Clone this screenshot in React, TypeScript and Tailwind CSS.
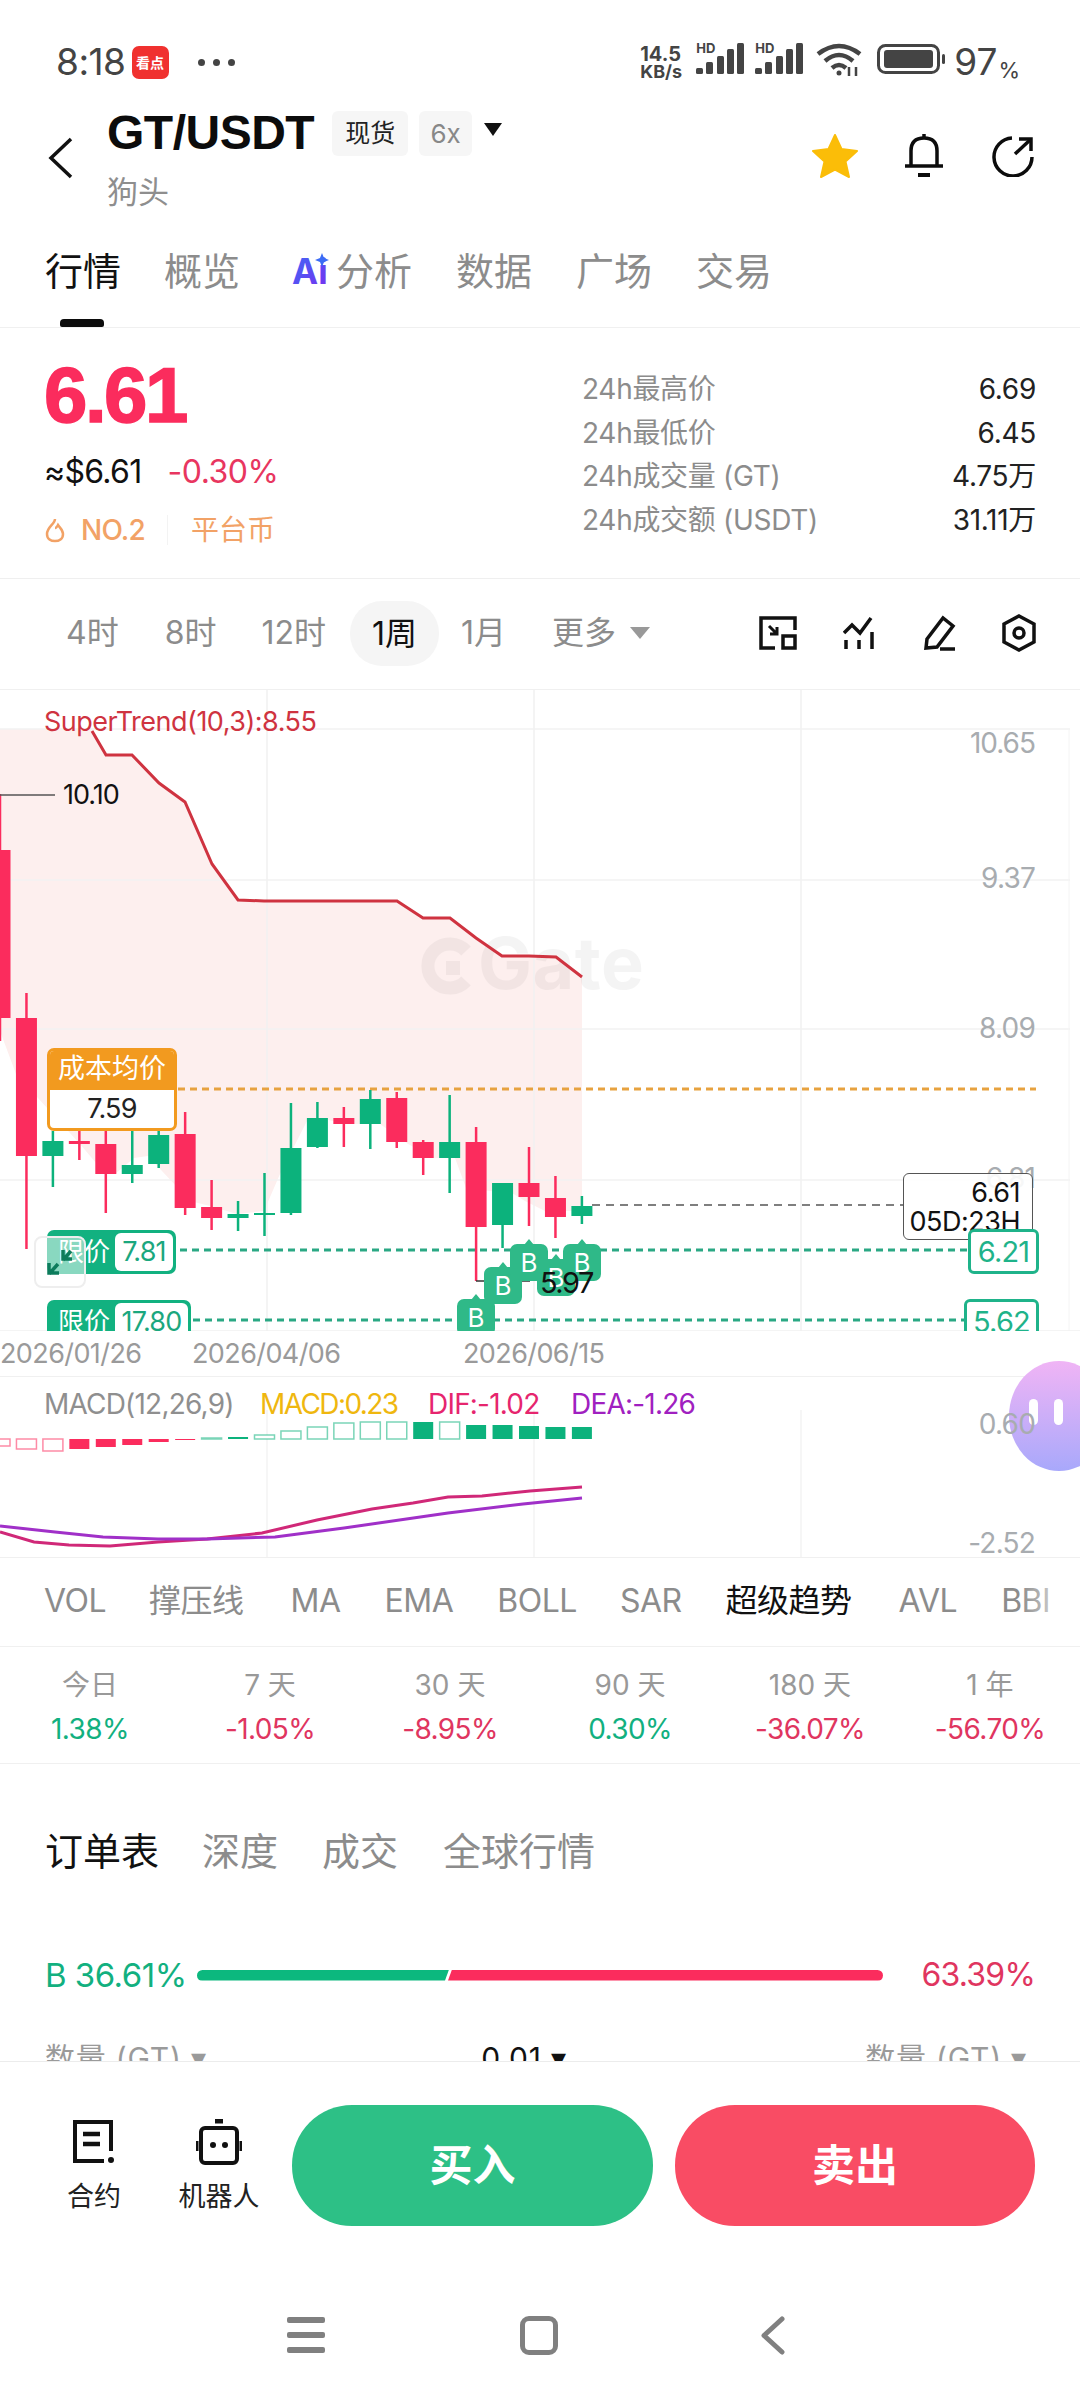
import React from 'react';

const font = { fontFamily: '"Inter","Noto Sans CJK SC",sans-serif' };

// [top wick, body top, body bottom, bottom wick, up]
const candles: [number, number, number, number, boolean][] = [
  [793, 849, 1017, 1040, false],
  [992, 1017, 1155, 1248, false],
  [1130, 1140, 1155, 1186, true],
  [1130, 1140, 1143, 1159, false],
  [1130, 1143, 1173, 1212, false],
  [1130, 1164, 1173, 1182, true],
  [1130, 1134, 1163, 1167, true],
  [1111, 1133, 1207, 1214, false],
  [1179, 1206, 1217, 1229, false],
  [1200, 1213, 1217, 1230, true],
  [1172, 1212, 1214, 1235, true],
  [1102, 1147, 1212, 1214, true],
  [1101, 1117, 1146, 1147, true],
  [1106, 1117, 1123, 1146, false],
  [1089, 1098, 1123, 1148, true],
  [1091, 1097, 1141, 1147, false],
  [1139, 1141, 1157, 1174, false],
  [1094, 1141, 1157, 1192, true],
  [1126, 1141, 1226, 1280, false],
  [1182, 1182, 1224, 1247, true],
  [1146, 1182, 1196, 1225, false],
  [1175, 1197, 1216, 1237, false],
  [1195, 1205, 1215, 1223, true],
];

// [top y, bottom y, kind]
const macdBars: [number, number, string][] = [
  [1439, 1446, 'hr'], [1439, 1449, 'hr'], [1439, 1451, 'hr'], [1439, 1449, 'r'], [1439, 1447, 'r'], [1439, 1445, 'r'],
  [1439, 1442, 'r'], [1439, 1440, 'r'], [1438, 1439, 'hg'], [1437, 1439, 'g'], [1435, 1439, 'hg'], [1431, 1439, 'hg'],
  [1427, 1439, 'hg'], [1423, 1439, 'hg'], [1422, 1439, 'hg'], [1422, 1439, 'hg'], [1422, 1439, 'g'], [1422, 1439, 'hg'],
  [1425, 1439, 'g'], [1425, 1439, 'g'], [1426, 1439, 'g'], [1427, 1439, 'g'], [1427, 1439, 'g'],
];

const periods = [
  { label: '今日', value: '1.38%', up: true },
  { label: '7 天', value: '-1.05%', up: false },
  { label: '30 天', value: '-8.95%', up: false },
  { label: '90 天', value: '0.30%', up: true },
  { label: '180 天', value: '-36.07%', up: false },
  { label: '1 年', value: '-56.70%', up: false },
];

const stats = [
  ['24h最高价', '6.69'],
  ['24h最低价', '6.45'],
  ['24h成交量 (GT)', '4.75万'],
  ['24h成交额 (USDT)', '31.11万'],
];

function StatusBar() {
  return (
    <div className="h-[104px] flex items-start justify-between pl-[56px] pr-[60px] pt-[43px] text-[#444]">
      <div className="flex items-center">
        <span className="text-[37px] leading-[38px] tracking-[-0.5px]">8:18</span>
        <div className="ml-[6px] w-[37px] h-[33px] rounded-[7px] bg-[#f0312f] text-white text-[14px] leading-[33px] font-bold text-center">看点</div>
        <div className="ml-[29px] flex gap-[8px]">
          <div className="w-[7px] h-[7px] rounded-full bg-[#444]" />
          <div className="w-[7px] h-[7px] rounded-full bg-[#444]" />
          <div className="w-[7px] h-[7px] rounded-full bg-[#444]" />
        </div>
      </div>
      <div className="flex items-start">
        <div className="w-[50px] font-bold text-[18px] leading-[17px] mt-[3px]">
          <div className="text-[20px]">14.5</div>
          <div>KB/s</div>
        </div>
        <Signal className="ml-[6px]" />
        <Signal className="ml-[11px]" />
        <svg className="ml-[13px]" width="46" height="34" viewBox="0 0 46 34" fill="none" stroke="#444" strokeWidth="4.5">
          <path d="M2 11 Q23 -5 44 11" />
          <path d="M9 18 Q23 6 37 18" />
          <path d="M16 25 Q23 19 30 25" />
          <circle cx="23" cy="30" r="2.5" fill="#444" stroke="none" />
          <path d="M33 24v9M40 24v9" strokeWidth="2.5" />
        </svg>
        <svg className="ml-[15px] mt-px" width="68" height="30" viewBox="0 0 68 30" fill="none">
          <rect x="1.5" y="1.5" width="60" height="27" rx="7" stroke="#444" strokeWidth="3" />
          <rect x="7" y="6" width="49" height="18" rx="3" fill="#444" />
          <rect x="65" y="10" width="3" height="10" rx="1.5" fill="#444" />
        </svg>
        <span className="ml-[9px] text-[37px] leading-[38px]">97</span>
        <span className="text-[22px] leading-[22px] mt-[16px] ml-px">%</span>
      </div>
    </div>
  );
}

function Signal({ className }: { className: string }) {
  return (
    <div className={`relative w-[48px] h-[32px] ${className}`}>
      <span className="absolute left-0 top-0 text-[13px] leading-[11px] font-bold">HD</span>
      <svg className="absolute left-0 top-0" width="48" height="32" viewBox="0 0 48 32" fill="#444">
        <rect x="0" y="25" width="7" height="6" rx="1.5" />
        <rect x="10" y="19" width="7" height="12" rx="1.5" />
        <rect x="21" y="13" width="7" height="18" rx="1.5" />
        <rect x="31" y="6" width="7" height="25" rx="1.5" />
        <rect x="41" y="0" width="7" height="31" rx="1.5" />
      </svg>
    </div>
  );
}

function Header() {
  return (
    <div className="h-[116px] flex items-start pl-[48px] pr-[46px]">
      <svg className="mt-[33px]" width="26" height="42" viewBox="0 0 26 42" fill="none" stroke="#111" strokeWidth="3.5">
        <path d="M23 2 L3 21 L23 40" />
      </svg>
      <div className="ml-[33px] mt-[2px]">
        <div className="flex items-center">
          <span className="text-[48px] leading-[54px] font-bold text-[#0c0c0c] tracking-[-0.5px]" style={{ fontFamily: '"Liberation Sans",sans-serif' }}>GT/USDT</span>
          <span className="ml-[18px] w-[76px] h-[45px] rounded-[6px] bg-[#f6f6f6] text-[25px] leading-[45px] text-center text-[#222]">现货</span>
          <span className="ml-[11px] w-[53px] h-[45px] rounded-[6px] bg-[#f6f6f6] text-[26px] leading-[45px] text-center text-[#888]">6x</span>
          <div className="ml-[12px] -mt-[8px] w-0 h-0 border-x-[9px] border-x-transparent border-t-[13px] border-t-[#111]" />
        </div>
        <div className="text-[31px] leading-[34px] text-[#8e8e8e] mt-[15px]">狗头</div>
      </div>
      <div className="ml-auto mt-[29px] flex items-center">
        <svg width="46" height="44" viewBox="0 0 46 44" fill="#fbbd08">
          <path d="M23 1 L29.5 15 L45 17 L33.5 27.5 L37 43 L23 35.5 L9 43 L12.500 27.500 L1 17 L16.500 15 Z" stroke="#fbbd08" strokeLinejoin="round" strokeWidth="2" />
        </svg>
        <svg className="ml-[46px]" width="40" height="46" viewBox="0 0 40 46" fill="none" stroke="#0c0c0c" strokeWidth="3.5">
          <path d="M1 33 H39" />
          <path d="M7 33 V18 C7 9 12 5 20 5 C28 5 33 9 33 18 V33" />
          <path d="M20 1 V5" />
          <path d="M14 42 H26" strokeWidth="4" />
        </svg>
        <svg className="ml-[48px]" width="42" height="42" viewBox="0 0 42 42" fill="none" stroke="#0c0c0c" strokeWidth="3.5">
          <path d="M40 22 A19 19 0 1 1 20 3" />
          <path d="M23 19 L38 5" />
          <path d="M27 4 H39 V16" />
        </svg>
      </div>
    </div>
  );
}

function Tabs() {
  return (
    <div className="relative h-[108px] border-b border-[#f0f0f0] flex items-start pl-[45px] pt-[31px] text-[38px] leading-[40px] text-[#8c8c8c]">
      <span className="text-[#111]">行情</span>
      <span className="ml-[43px]">概览</span>
      <span className="ml-[52px] flex items-center">
        <svg className="overflow-visible" width="38" height="36" viewBox="0 0 38 36">
          <defs>
            <linearGradient id="ai" x1="0" y1="0" x2="1" y2="1">
              <stop offset="0" stopColor="#3b6cf5" />
              <stop offset="1" stopColor="#7a2df0" />
            </linearGradient>
          </defs>
          <text x="0" y="31" fontSize="35" fontWeight="700" fill="url(#ai)" fontFamily="Inter">Ai</text>
          <path d="M30 0 L32 5 L37 7 L32 9 L30 14 L28 9 L23 7 L28 5 Z" fill="#3b6cf5" />
        </svg>
        <span className="ml-[6px]">分析</span>
      </span>
      <span className="ml-[44px]">数据</span>
      <span className="ml-[44px]">广场</span>
      <span className="ml-[44px]">交易</span>
      <div className="absolute left-[60px] bottom-0 w-[44px] h-[8px] rounded-t-[4px] rounded-b-[2px] bg-[#0c0c0c]" />
    </div>
  );
}

function PriceBlock() {
  return (
    <div className="h-[251px] border-b border-[#efefef] flex pl-[44px] pr-[44px]">
      <div className="w-[538px]">
        <div className="mt-[29px] text-[78px] leading-[76px] font-extrabold text-[#fb2c5d] tracking-[-2.5px]" style={{ fontFamily: '"Liberation Sans",sans-serif', WebkitTextStroke: '1.5px #fb2c5d' }}>6.61</div>
        <div className="mt-[20px] flex items-center text-[32px] leading-[38px]">
          <span className="text-[#111] tracking-[-0.7px]">≈$6.61</span>
          <span className="ml-[26px] text-[#e8365f] tracking-[-0.5px]">-0.30%</span>
        </div>
        <div className="mt-[23px] flex items-center text-[#f2a266] text-[28px] leading-[32px]">
          <svg width="22" height="26" viewBox="0 0 22 26" fill="none" stroke="#f2a266" strokeWidth="2.5">
            <path d="M11 2 C11 7 3 10 3 17 C3 22 7 24 11 24 C15 24 19 22 19 17 C19 13 16 11 14 8 C13 10 12 11 11 11" />
          </svg>
          <span className="ml-[15px] font-medium tracking-[-0.8px]">NO.2</span>
          <div className="ml-[22px] w-px h-[30px] bg-[#f3f3f3]" />
          <span className="ml-[23px]">平台币</span>
        </div>
      </div>
      <div className="flex-1 pt-[47px]">
        {stats.map(([k, v]) => (
          <div key={k} className="h-[43.700px] flex justify-between items-start text-[28px] leading-[28px] tracking-[-0.3px]">
            <span className="text-[#8c8c8c]">{k}</span>
            <span className="text-[#222] tracking-[-0.3px]">{v}</span>
          </div>
        ))}
      </div>
    </div>
  );
}

function PeriodRow() {
  return (
    <div className="h-[110px] flex items-center pl-[66px] pr-[44px] pb-[2px] text-[32px] text-[#8c8c8c]">
      <span>4时</span>
      <span className="ml-[46px]">8时</span>
      <span className="ml-[45px]">12时</span>
      <span className="ml-[24px] w-[89px] h-[65px] rounded-[32px] bg-[#f5f5f5] text-[#111] text-center leading-[65px]">1周</span>
      <span className="ml-[22px]">1月</span>
      <span className="ml-[46px]">更多</span>
      <div className="ml-[14px] w-0 h-0 border-x-[10px] border-x-transparent border-t-[12px] border-t-[#999]" />
      <div className="ml-auto flex items-center gap-[46px]">
        <svg width="38" height="34" viewBox="0 0 38 34" fill="none" stroke="#111" strokeWidth="3.5">
          <path d="M16 32 H2 V2 H36 V14" />
          <path d="M24 32 V20 H36 V32 Z" />
          <path d="M10 10 L18 18 M18 11 V18 H11" strokeWidth="3" />
        </svg>
        <svg width="33" height="34" viewBox="0 0 33 34" fill="none" stroke="#111" strokeWidth="3.5">
          <path d="M1 17 L9 9 L17 17 L28 2" />
          <path d="M3 24 V33 M16 24 V33 M29 16 V33" />
        </svg>
        <svg width="34" height="36" viewBox="0 0 34 36" fill="none" stroke="#111" strokeWidth="3.500">
          <path d="M5 24 L21 3 L31 11 L15 32 L4 33 Z" />
          <path d="M18 34 H33" />
        </svg>
        <svg width="34" height="38" viewBox="0 0 34 38" fill="none" stroke="#111" strokeWidth="3.500">
          <path d="M17 2 L32 10 V28 L17 36 L2 28 V10 Z" />
          <circle cx="17" cy="19" r="5" />
        </svg>
      </div>
    </div>
  );
}

function CandleChart() {
  const up = '#0cb27c';
  const down = '#fb2c5d';
  return (
    <svg className="absolute left-0 top-0" width="1080" height="641" viewBox="0 689 1080 641">
      {/* pink band under the supertrend */}
      <polygon
        fill="#fdefee"
        points="0,728 92,728 106,754 132,754 159,782 185,801 212,863 238,899 264,900 397,900 423,917 450,917 476,937 502,955 529,955 556,956 582,976 582,1210 545,1210 525,1200 512,1192 490,1190 466,1187 455,1157 434,1157 408,1143 380,1123 345,1123 320,1117 307,1120 280,1173 264,1210 237,1213 210,1205 190,1200 148,1155 134,1157 115,1173 96,1162 80,1143 16,1073 0,1030"
      />
      {[728, 879, 1028, 1179].map((y) => (
        <line key={y} x1="0" x2="1070" y1={y} y2={y} stroke="#f2f2f2" strokeWidth="1.5" />
      ))}
      {[267, 534, 801].map((x) => (
        <line key={x} x1={x} x2={x} y1="689" y2="1330" stroke="#f1f1f1" strokeWidth="1.5" />
      ))}
      <line x1="1069" x2="1069" y1="728" y2="1330" stroke="#f4f4f4" strokeWidth="1" />
      <line x1="0" x2="1080" y1="1330" y2="1330" stroke="#f0f0f0" strokeWidth="1.5" />

      {/* watermark */}
      <g opacity="0.04">
        <path d="M466 950 A 22 22 0 1 0 466 980" fill="none" stroke="#000" strokeWidth="13" />
        <rect x="446" y="960" width="14" height="14" fill="#000" />
        <text x="478" y="988" fontSize="72" fontWeight="700" fontFamily="Inter" fill="#000" letterSpacing="0.5">Gate</text>
      </g>

      <polyline
        fill="none"
        stroke="#cf3340"
        strokeWidth="3"
        points="92,730 106,754 132,754 159,782 185,801 212,863 238,899 264,900 397,900 423,917 450,917 476,937 502,955 529,955 556,956 582,976"
      />

      {/* price lines */}
      <line x1="178" x2="1036" y1="1088" y2="1088" stroke="#e7a23f" strokeWidth="3" strokeDasharray="7 5" />
      <line x1="180" x2="968" y1="1249" y2="1249" stroke="#2aa884" strokeWidth="3" strokeDasharray="7 5" />
      <line x1="193" x2="965" y1="1319" y2="1319" stroke="#2aa884" strokeWidth="3" strokeDasharray="7 5" />
      <line x1="592" x2="903" y1="1204" y2="1204" stroke="#555" strokeWidth="1.5" strokeDasharray="8 6" />

      {candles.map(([high, top, bottom, low, isUp], i) => {
        const x = i * 26.45;
        const c = isUp ? up : down;
        return (
          <g key={i}>
            <line x1={x} x2={x} y1={high} y2={low} stroke={c} strokeWidth="2.5" />
            <rect x={x - 10.5} y={top} width="21" height={bottom - top} fill={c} />
          </g>
        );
      })}

      <line x1="0" x2="55" y1="794" y2="794" stroke="#555" strokeWidth="1.5" />
      <line x1="476" x2="530" y1="1280" y2="1280" stroke="#333" strokeWidth="1.5" />
    </svg>
  );
}

function BuyMark({ x, top }: { x: number; top: number }) {
  return (
    <div className="absolute w-[38px] h-[37px] rounded-[7px] bg-[#2fb988] text-white text-[26px] leading-[37px] text-center" style={{ left: x - 19, top: top - 689 }}>
      <div className="absolute left-[14px] -top-[5px] w-0 h-0 border-x-[5px] border-x-transparent border-b-[6px] border-b-[#2fb988]" />
      B
    </div>
  );
}

function ChartPanel() {
  return (
    <div className="h-[687px] relative border-t border-[#f0f0f0] overflow-hidden">
      <CandleChart />
      <div className="absolute left-[44px] top-[15px] text-[27px] leading-[34px] text-[#cf3340] tracking-[-0.5px]">SuperTrend(10,3):8.55</div>
      <div className="absolute left-[63px] top-[88px] text-[27px] leading-[34px] text-[#111] tracking-[-1px]">10.10</div>

      <div className="absolute right-[45px] top-[36px] text-[28px] leading-[34px] text-[#a8acb0] tracking-[-1px]">10.65</div>
      <div className="absolute right-[45px] top-[171px] text-[28px] leading-[34px] text-[#a8acb0] tracking-[-0.8px]">9.37</div>
      <div className="absolute right-[45px] top-[321px] text-[28px] leading-[34px] text-[#a8acb0] tracking-[-0.8px]">8.09</div>
      <div className="absolute right-[45px] top-[471px] text-[28px] leading-[34px] text-[#a8acb0] tracking-[-0.8px]">6.81</div>

      {/* cost badge */}
      <div className="absolute left-[47px] top-[358px] w-[130px] h-[83px] rounded-[7px] border-[3px] border-[#f29a1f] bg-white overflow-hidden">
        <div className="h-[39px] bg-[#f29a1f] text-white text-[27px] leading-[36px] text-center">成本均价</div>
        <div className="text-center text-[27px] leading-[37px] text-[#222] tracking-[-0.8px]">7.59</div>
      </div>

      {/* limit badges */}
      <div className="absolute left-[47px] top-[540px] h-[44px] w-[129px] rounded-[7px] bg-[#12b180] flex items-center pl-[11px] pr-[3px]">
        <span className="text-white text-[26px] leading-[30px]">限价</span>
        <span className="ml-auto w-[58px] h-[38px] rounded-[6px] bg-white text-[#1ba77e] text-[27px] leading-[38px] text-center tracking-[-0.8px]">7.81</span>
      </div>
      <div className="absolute left-[47px] top-[610px] h-[44px] w-[144px] rounded-[7px] bg-[#12b180] flex items-center pl-[11px] pr-[3px]">
        <span className="text-white text-[26px] leading-[30px]">限价</span>
        <span className="ml-auto w-[73px] h-[38px] rounded-[6px] bg-white text-[#1ba77e] text-[27px] leading-[38px] text-center tracking-[-0.8px]">17.80</span>
      </div>

      {/* shrink control over the limit badge */}
      <div className="absolute left-[34px] top-[546px] w-[52px] h-[52px] rounded-[8px] border-2 border-[#eeeeee] bg-white/50 flex items-center justify-center">
        <svg width="26" height="26" viewBox="0 0 26 26" fill="none" stroke="#0c7c5c" strokeWidth="3.5">
          <path d="M2 25 L11 15 M2 14 V24 H12" />
          <path d="M16 11 L24 2 M16 1 V10 H25" />
        </svg>
      </div>

      <BuyMark x={476} top={1298} />
      <BuyMark x={556} top={1258} />
      <BuyMark x={503} top={1266} />
      <BuyMark x={529} top={1243} />
      <BuyMark x={582} top={1243} />
      <div className="absolute left-[540px] top-[576px] text-[29px] leading-[34px] text-[#111] tracking-[-1.5px]">5.97</div>

      {/* right tags */}
      <div className="absolute left-[903px] top-[483px] w-[130px] h-[67px] rounded-[6px] border-[1.5px] border-[#555] bg-white/90 text-right pr-[12px] text-[27px] leading-[29px] text-[#111] pt-[4px] tracking-[-0.5px]">
        <div>6.61</div>
        <div>05D:23H</div>
      </div>
      <div className="absolute left-[968px] top-[539px] w-[71px] h-[45px] rounded-[6px] border-[3px] border-[#1fb38a] bg-white text-center text-[29px] leading-[39px] text-[#1fb38a] tracking-[-0.8px]">6.21</div>
      <div className="absolute left-[964px] top-[609px] w-[75px] h-[45px] rounded-[6px] border-[3px] border-[#1fb38a] bg-white text-center text-[29px] leading-[39px] text-[#1fb38a] tracking-[-0.8px]">5.62</div>

      {/* time axis */}
      <div className="absolute left-0 top-[641px] w-full h-[46px] bg-white text-[27px] leading-[46px] text-[#9a9a9a] tracking-[-0.6px]">
        <span className="absolute left-0">2026/01/26</span>
        <span className="absolute left-[192px]">2026/04/06</span>
        <span className="absolute left-[463px]">2026/06/15</span>
      </div>
    </div>
  );
}

function MacdPanel() {
  return (
    <div className="h-[182px] relative border-t border-b border-[#f0f0f0]">
      <svg className="absolute left-0 top-0" width="1080" height="180" viewBox="0 1377 1080 180">
        {[267, 534, 801].map((x) => (
          <line key={x} x1={x} x2={x} y1="1410" y2="1557" stroke="#f3f3f3" strokeWidth="1.5" />
        ))}
        {macdBars.map(([top, bottom, kind], i) => {
          const x = i * 26.45 - 10;
          const color = kind.endsWith('r') ? '#fb2c5d' : '#0cb27c';
          const hollow = kind.startsWith('h');
          return (
            <rect
              key={i}
              x={x}
              y={top}
              width="20"
              height={bottom - top}
              fill={hollow ? '#fff' : color}
              stroke={hollow ? color : 'none'}
              strokeOpacity="0.55"
              strokeWidth="1.5"
            />
          );
        })}
        <polyline fill="none" stroke="#d02878" strokeWidth="3" points="0,1532 34,1542 69,1545 110,1546 158,1542 207,1539 262,1533 317,1520 372,1509 413,1503 448,1497 482,1496 530,1491 582,1487" />
        <polyline fill="none" stroke="#a030c8" strokeWidth="3" points="0,1526 55,1532 103,1537 158,1539 207,1539 275,1537 344,1528 448,1513 523,1504 582,1498" />
      </svg>
      <div className="absolute left-[44px] top-[10px] flex text-[28px] leading-[34px] tracking-[-0.8px]">
        <span className="w-[216px] text-[#8f8f8f]">MACD(12,26,9)</span>
        <span className="w-[168px] text-[#efb70f] tracking-[-1.6px]">MACD:0.23</span>
        <span className="w-[143px] text-[#e6256e]">DIF:-1.02</span>
        <span className="text-[#a020c0]">DEA:-1.26</span>
      </div>
      {/* floating assistant */}
      <div className="absolute left-[1009px] -top-[16px] w-[100px] h-[110px] rounded-[50%] bg-gradient-to-b from-[#f0b4f5] to-[#a8a8fb]">
        <div className="absolute left-[20px] top-[38px] w-[9px] h-[26px] rounded-full bg-white" />
        <div className="absolute left-[45px] top-[38px] w-[9px] h-[26px] rounded-full bg-white" />
      </div>
      <div className="absolute right-[45px] top-[30px] text-[28px] leading-[34px] text-[#a8acb0] tracking-[-0.8px]">0.60</div>
      <div className="absolute right-[45px] top-[149px] text-[28px] leading-[34px] text-[#a8acb0] tracking-[-0.8px]">-2.52</div>
    </div>
  );
}

function IndicatorRow() {
  return (
    <div className="h-[89px] relative flex items-center pl-[44px] pb-[2px] text-[32px] text-[#8c8c8c] border-b border-[#f0f0f0] overflow-hidden whitespace-nowrap tracking-[-0.5px]">
      <span>VOL</span>
      <span className="ml-[43px]">撑压线</span>
      <span className="ml-[47px]">MA</span>
      <span className="ml-[44px]">EMA</span>
      <span className="ml-[44px]">BOLL</span>
      <span className="ml-[43px]">SAR</span>
      <span className="ml-[44px] text-[#111]">超级趋势</span>
      <span className="ml-[47px]">AVL</span>
      <span className="ml-[44px]">BBI</span>
      <div className="absolute right-0 top-0 w-[60px] h-full bg-gradient-to-r from-white/0 to-white" />
    </div>
  );
}

function PeriodChanges() {
  return (
    <div className="h-[117px] grid grid-cols-6 border-b border-[#f0f0f0] pt-[21px]">
      {periods.map((p) => (
        <div key={p.label} className="text-center">
          <div className="text-[28px] leading-[34px] text-[#999]">{p.label}</div>
          <div className={`mt-[10px] text-[28px] leading-[34px] tracking-[-0.6px] ${p.up ? 'text-[#12b07f]' : 'text-[#e0355f]'}`}>{p.value}</div>
        </div>
      ))}
    </div>
  );
}

function OrderBook() {
  return (
    <div className="h-[297px] overflow-hidden px-[45px]">
      <div className="mt-[66px] flex text-[38px] leading-[42px] text-[#8c8c8c]">
        <span className="text-[#111]">订单表</span>
        <span className="ml-[43px]">深度</span>
        <span className="ml-[44px]">成交</span>
        <span className="ml-[45px]">全球行情</span>
      </div>
      <div className="mt-[83px] flex items-center text-[33px] leading-[40px] tracking-[-0.5px]">
        <span className="w-[152px] text-[#12b07f] whitespace-nowrap">B 36.61%</span>
        <div className="w-[686px] h-[11px] flex">
          <div className="w-[252px] h-full bg-[#0cb87e] rounded-l-full" style={{ clipPath: 'polygon(0 0,100% 0,calc(100% - 4px) 100%,0 100%)' }} />
          <div className="flex-1 -ml-px h-full bg-[#fb2c5d] rounded-r-full" style={{ clipPath: 'polygon(4px 0,100% 0,100% 100%,0 100%)' }} />
        </div>
        <span className="ml-auto text-[#e0355f] text-[32px] tracking-[-0.8px]">63.39%</span>
      </div>
      <div className="mt-[46px] flex justify-between text-[30px] leading-[34px] text-[#9a9a9a] tracking-[0.8px]">
        <span>数量 (GT) ▾</span>
        <span className="mr-[24px] text-[#111]">0.01 ▾</span>
        <span className="mr-[8px]">数量 (GT) ▾</span>
      </div>
    </div>
  );
}

function BottomBar() {
  return (
    <div className="border-t border-[#ececec]">
      <div className="flex items-start pl-[58px] pr-[45px] pt-[43px]">
        <div className="w-[72px] flex flex-col items-center">
          <svg className="mt-[14px]" width="44" height="46" viewBox="0 0 44 46" fill="none" stroke="#111" strokeWidth="4">
            <path d="M32 42 H3 V3 H39 V32" />
            <path d="M11 15 H28 M11 25 H28" strokeWidth="4.5" />
            <circle cx="39" cy="41" r="3" fill="#111" stroke="none" />
          </svg>
          <span className="mt-[16px] text-[27px] leading-[32px] text-[#222]">合约</span>
        </div>
        <div className="ml-[47px] w-[84px] flex flex-col items-center">
          <svg className="mt-[14px]" width="46" height="46" viewBox="0 0 46 46" fill="none" stroke="#111" strokeWidth="4">
            <rect x="5" y="9" width="36" height="35" rx="4" />
            <path d="M19 2 H27" strokeWidth="5" />
            <path d="M1 22 V32 M45 22 V32" strokeWidth="3" />
            <circle cx="17" cy="26" r="3" fill="#111" stroke="none" />
            <circle cx="29" cy="26" r="3" fill="#111" stroke="none" />
          </svg>
          <span className="mt-[16px] text-[27px] leading-[32px] text-[#222]">机器人</span>
        </div>
        <button className="ml-[31px] w-[361px] h-[121px] rounded-[60px] bg-[#2dc086] text-white text-[43px] font-bold">买入</button>
        <button className="ml-[22px] w-[360px] h-[121px] rounded-[60px] bg-[#f94c64] text-white text-[43px] font-bold">卖出</button>
      </div>
      <div className="mt-[89px] pr-[8px] flex items-center justify-center h-[40px]">
        <div className="w-[38px] flex flex-col gap-[9px]">
          <div className="h-[6px] bg-[#808080] rounded-[2px]" />
          <div className="h-[6px] bg-[#808080] rounded-[2px]" />
          <div className="h-[6px] bg-[#808080] rounded-[2px]" />
        </div>
        <div className="ml-[195px] w-[38px] h-[39px] rounded-[9px] border-[5px] border-[#808080]" />
        <svg className="ml-[202px]" width="25" height="39" viewBox="0 0 25 39" fill="none" stroke="#808080" strokeWidth="5" strokeLinecap="round" strokeLinejoin="round">
          <path d="M22 3 L4 19.500 L22 36" />
        </svg>
      </div>
    </div>
  );
}

export default function App() {
  return (
    <div className="w-[1080px] h-[2400px] bg-white overflow-hidden" style={font}>
      <StatusBar />
      <Header />
      <Tabs />
      <PriceBlock />
      <PeriodRow />
      <ChartPanel />
      <MacdPanel />
      <IndicatorRow />
      <PeriodChanges />
      <OrderBook />
      <BottomBar />
    </div>
  );
}
